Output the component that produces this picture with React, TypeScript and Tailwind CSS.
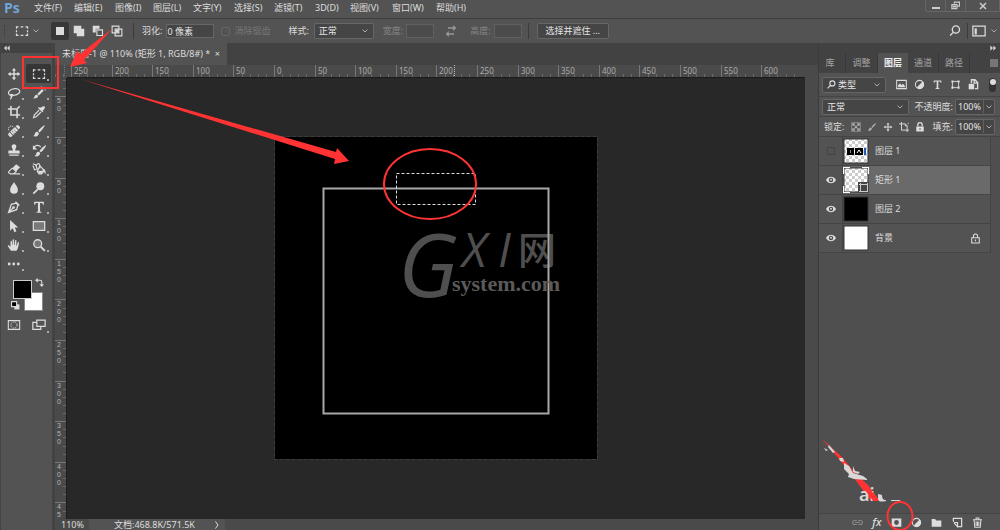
import { ReactNode } from "react";

const menus = [
  { label: "文件(F)", width: "w-10" },
  { label: "编辑(E)", width: "w-[41px]" },
  { label: "图像(I)", width: "w-[38px]" },
  { label: "图层(L)", width: "w-10" },
  { label: "文字(Y)", width: "w-[41px]" },
  { label: "选择(S)", width: "w-10" },
  { label: "滤镜(T)", width: "w-[41px]" },
  { label: "3D(D)", width: "w-[35px]" },
  { label: "视图(V)", width: "w-[42px]" },
  { label: "窗口(W)", width: "w-11" },
  { label: "帮助(H)", width: "w-10" },
];

const line = "fill-none stroke-current";

function Icon({ children, className = "size-4" }: { children: ReactNode; className?: string }) {
  return (
    <svg aria-hidden="true" viewBox="0 0 16 16" className={`shrink-0 ${className}`} fill="currentColor">
      {children}
    </svg>
  );
}

const marqueePath = (
  <path
    className={line}
    strokeWidth="1.4"
    d="M1.7 5.5V3.2H4M6.5 3.2h3M12 3.2h2.3v2.3M14.3 7v2.5M14.3 10.8V13H12M9.5 13h-3M4 13H1.7v-2.2M1.7 9.5V7"
  />
);
const movePath = (
  <path d="M8 1l2.5 3H8.8v3.200H12V5.500L15 8l-3 2.500V8.800H8.800V12h1.700L8 15l-2.500-3h1.700V8.800H4v1.700L1 8l3-2.500v1.700h3.200V4H5.500z" />
);
const brushPath = (
  <path d="M14.800 1.200c-2.500 1-6 4.300-7.800 6.800l1.700 1.600c2.400-2.100 5.400-5.800 6.100-8.400zM6.200 8.900C4.300 8.700 3.400 10 3.200 11.500c-.2 1.400-.9 2-2 2.300 2.200 1.200 6.400.7 6.700-3.300z" />
);
const textPath = <path d="M2.500 2h11v3.500h-1c-.2-1.500-.8-2-2.200-2H9.200v9c0 .7.400.9 1.600 1v1H5.200v-1c1.200-.1 1.600-.3 1.600-1v-9H5.700c-1.400 0-2 .5-2.200 2h-1z" />;
const halfPath = (
  <>
    <circle cx="8" cy="8" r="6" className={line} strokeWidth="1.5" />
    <path d="M12.500 3.500A6 6 0 1 1 4 12.500z" />
  </>
);
const framePath = (
  <>
    <path className={line} strokeWidth="1.3" d="M4 3.500h8M4 12.500h8M3.500 4v8M12.500 4v8" />
    <path d="M2 2h3v3H2zM11 2h3v3h-3zM2 11h3v3H2zM11 11h3v3h-3z" />
  </>
);

const tools: { name: string; art: ReactNode }[] = [
  { name: "移动", art: movePath },
  { name: "矩形选框", art: marqueePath },
  {
    name: "套索",
    art: <path className={line} strokeWidth="1.4" d="M5.500 10.800C1.500 11 .8 7.500 3 5.300 5.800 2.500 12.500 2 14.200 4.800c1.500 2.900-2.500 5.700-7 5.900M5.500 9.500c-2 0-2.300 2 0 2.100 2-.1 1.500-2 0-2.100zM4.300 11.500c1.200 1 .8 2.500-.8 3.500" />,
  },
  {
    name: "快速选择",
    art: (
      <>
        <path d="M11.500 3.500l1.800 1.800-5.500 5.500L6 9zM5.300 9.700l1.800 1.800c-.8 2.300-3 3-5.800 2.800 1.500-.8 1.500-3.700 4-4.600z" />
        <path className={line} strokeDasharray="1.5 1.5" strokeWidth="1.2" d="M10 1.500c3-1 5.500 1 5 5" />
      </>
    ),
  },
  { name: "裁剪", art: <path className={line} strokeWidth="1.8" d="M4.500 1v10.500H15M1 4.500h10.500V15M12 4l2.500-2.500" /> },
  {
    name: "吸管",
    art: (
      <>
        <path d="M10.800 2.700c1.300-1.500 2.700-1.700 3.500-.9s.6 2.200-.9 3.500l-1.200 1.100.8.800-1.200 1.200-5-5L8 2.200l.8.800z" />
        <path className={line} strokeWidth="1.4" d="M8.200 5.800l-5.500 5.500-.9 3 3-.9L10.300 8" />
      </>
    ),
  },
  {
    name: "污点修复画笔",
    art: (
      <>
        <path d="M9.800 2.500l2-1.500c1.500.2 3 1.700 3.200 3.200l-1.800 2zM9 3.300l3.700 3.700-5.500 5.500-3.700-3.700zM2.800 9.500l3.700 3.700-1.700 1.600c-1.700.2-3.700-1.800-3.500-3.500z" />
        <path className={line} strokeDasharray="1.5 1" d="M7 3C4 .8.200 4 2.300 8" />
        <path fill="#535353" d="M8 6.500h1v1H8zM9.700 8h1v1h-1zM6 8.300h1v1H6zM7.700 10h1v1h-1z" />
      </>
    ),
  },
  { name: "画笔", art: brushPath },
  {
    name: "仿制图章",
    art: <path d="M8 1.500c2 0 3.200 1.600 2.500 3.300L9.500 7v1.500h4c.7 0 1 .4 1 1V12h-13V9.500c0-.6.300-1 1-1h4V7l-1-2.200C4.800 3.100 6 1.500 8 1.500zM2.500 13h11v1.500h-11z" />,
  },
  {
    name: "历史记录画笔",
    art: (
      <>
        <g transform="translate(1.5 1)">{brushPath}</g>
        <path className={line} strokeWidth="1.5" d="M2 5.500c2-3.500 5.500-3.500 8-1" />
        <path d="M1 2.500v5h5z" />
      </>
    ),
  },
  {
    name: "橡皮擦",
    art: (
      <>
        <path d="M10.500 2.500L15 6l-4.500 4.700L6 7z" />
        <path className={line} strokeWidth="1.3" d="M6 7l-4 4c-.4.500-.3 1 0 1.300L4 13.500h3.500l3-2.800L6 7M8 13.500h7" />
      </>
    ),
  },
  {
    name: "油漆桶",
    art: (
      <>
        <path className={line} strokeWidth="1.3" d="M1 2l3 1 2 5-3 1-2-5M5 5c0-4 4-4 4-.5v3" />
        <path className={line} strokeWidth="1.4" d="M9 4.500l5 5-3 4H8L6 10.500z" />
        <path d="M12 8c3 0 4 2 3.500 6-1.500-1-1-3-3-3.500zM7 10h6l-2 3H8z" />
      </>
    ),
  },
  { name: "模糊", art: <path d="M8 1c1.500 3.300 4.500 5.500 4.500 9a4.500 4.500 0 0 1-9 0C3.500 6.500 6.500 4.300 8 1z" /> },
  {
    name: "减淡",
    art: (
      <>
        <circle cx="9.500" cy="6" r="4.500" />
        <path className={line} strokeWidth="2" d="M6.500 9.500L1.500 14.500" />
      </>
    ),
  },
  {
    name: "钢笔",
    art: (
      <>
        <path className={line} strokeWidth="1.5" d="M10.500 3.500L5 5 1.800 14.200 11 11l1.500-5.500zM2 14l5-5" />
        <circle cx="7.500" cy="8.500" r="1.500" />
        <path d="M10.200 1.300l4.500 4.500-1.500 1-4-4z" />
      </>
    ),
  },
  { name: "横排文字", art: textPath },
  { name: "路径选择", art: <path d="M3.500 1v12.500l3-2.800L8.500 15l2.300-1-1.900-4.200 3.900-.1z" /> },
  { name: "矩形", art: <path className="stroke-current" fill="#7a7a7a" strokeWidth="1.4" d="M1.500 3h13v10h-13z" /> },
  {
    name: "抓手",
    art: <path d="M4.500 14.500L1 9.500c-.5-1 .6-1.600 1.400-1L4 10V4c0-1.200 1.500-1.200 1.600 0l.4 4h.4V2.200c0-1.200 1.600-1.200 1.700 0V8h.5l.6-5c.1-1.200 1.700-1 1.600.2L10.600 8.500h.5l1.100-3.400c.4-1 1.700-.7 1.500.4-.7 4-1 6.500-2.700 9z" />,
  },
  {
    name: "缩放",
    art: (
      <>
        <circle cx="6.500" cy="6.500" r="4.500" fill="#777" className="stroke-current" strokeWidth="1.5" />
        <path className={line} strokeWidth="2.2" d="M10 10l4.700 4.700" />
      </>
    ),
  },
  {
    name: "编辑工具栏",
    art: (
      <>
        <circle cx="2.500" cy="8" r="1.600" />
        <circle cx="7.700" cy="8" r="1.600" />
        <circle cx="12.900" cy="8" r="1.600" />
      </>
    ),
  },
];

const layers = [
  { name: "图层 1", thumb: "pics", visible: false },
  { name: "矩形 1", thumb: "shape", visible: true, active: true },
  { name: "图层 2", thumb: "black", visible: true },
  { name: "背景", thumb: "white", visible: true, locked: true },
];

function Chevron({ className = "size-2" }: { className?: string }) {
  return (
    <svg aria-hidden="true" viewBox="0 0 8 8" className={`shrink-0 fill-none stroke-[#aaa] ${className}`}>
      <path d="M1.500 2.500L4 5l2.500-2.500" />
    </svg>
  );
}

function Dropdown({ label, value, className, icon }: { label: string; value: string; className: string; icon?: ReactNode }) {
  return (
    <div className={`relative flex h-4 items-center rounded-xs border border-[#666] bg-[#454545] px-1 ${className}`}>
      {icon}
      <select aria-label={label} className="min-w-0 flex-1 appearance-none bg-transparent text-[#e5e5e5] outline-none">
        <option>{value}</option>
      </select>
      <Chevron />
    </div>
  );
}

function PercentField({ label }: { label: string }) {
  return (
    <div className="mr-[5px] flex h-4 w-10 items-center rounded-xs border border-[#666] bg-[#454545]">
      <input
        aria-label={label}
        defaultValue="100%"
        className="min-w-0 flex-1 border-r border-[#606060] bg-transparent pl-[2px] text-[#e5e5e5] outline-none"
      />
      <button aria-label={`${label}滑块`} className="flex w-[10px] justify-center">
        <Chevron />
      </button>
    </div>
  );
}

function Divider() {
  return <span className="h-4 w-px shrink-0 bg-[#3c3c3c]" />;
}

function MenuBar() {
  return (
    <header className="flex h-[19px] shrink-0 border-b border-[#3d3d3d]">
      <span className="w-[34px] pl-1 font-['Open_Sans',sans-serif] text-[14px] leading-4 font-bold text-[#6fa5d8]">Ps</span>
      <nav className="flex">
        {menus.map((menu) => (
          <button key={menu.label} className={`h-4 text-left whitespace-nowrap ${menu.width}`}>
            {menu.label}
          </button>
        ))}
      </nav>
      <div className="ml-auto flex h-3 w-[75px] rounded-b-xs border border-t-0 border-[#666]">
        <button aria-label="最小化" className="flex w-5 items-center justify-center border-r border-[#666]">
          <span className="mt-1 h-[2px] w-2 bg-[#ccc]" />
        </button>
        <button aria-label="还原" className="flex w-5 items-center justify-center border-r border-[#666]">
          <Icon className="size-[9px] text-[#ccc]">
            <path className={line} strokeWidth="2" d="M6 5V2h9v7h-4M1.500 6.500h9v7h-9zM4 9.500h4v1H4z" />
          </Icon>
        </button>
        <button aria-label="关闭" className="flex flex-1 items-center justify-center">
          <Icon className="size-[8px] text-[#ccc]">
            <path className={line} strokeWidth="3" d="M2 2l12 12M14 2L2 14" />
          </Icon>
        </button>
      </div>
    </header>
  );
}

function OptionsBar() {
  return (
    <div className="flex h-6 shrink-0 items-center whitespace-nowrap">
      <span className="ml-1 h-3 w-px border-l border-dotted border-[#3a3a3a]" />
      <Icon className="ml-[10px] size-[14px]">{marqueePath}</Icon>
      <Chevron className="mr-[11px] ml-[3px] size-2" />
      <div className="flex h-[18px] gap-[1px]">
        <button aria-label="新选区" className="flex w-[18px] items-center justify-center rounded-xs bg-[#383838]">
          <span className="size-2 bg-[#ddd]" />
        </button>
        <button aria-label="添加到选区" className="flex w-[18px] items-center justify-center">
          <Icon className="size-[12px]">
            <path d="M1 1h10v4h4v10H5v-4H1z" />
          </Icon>
        </button>
        <button aria-label="从选区减去" className="flex w-[18px] items-center justify-center">
          <Icon className="size-[12px]">
            <path d="M1 1h9v4H5v5H1z" />
            <path className={line} strokeWidth="1.5" d="M6.500 6.500h7.500V14H6.500z" />
          </Icon>
        </button>
        <button aria-label="与选区交叉" className="flex w-[18px] items-center justify-center">
          <Icon className="size-[12px]">
            <path className={line} strokeWidth="1.5" d="M1.500 1.500h9v9h-9zM5.500 5.500h9v9h-9z" />
            <path d="M6 6h4v4H6z" />
          </Icon>
        </button>
      </div>
      <span className="ml-[7px] flex">
        <Divider />
      </span>
      <label className="ml-2 flex items-center gap-1">
        羽化:
        <input defaultValue="0 像素" className="h-[14px] w-12 border border-[#666] bg-[#454545] text-[#e5e5e5] outline-none" />
      </label>
      <label className="ml-[7px] flex items-center gap-1 text-[#777]">
        <input type="checkbox" disabled className="size-[9px] appearance-none rounded-xs border border-[#656565]" />
        消除锯齿
      </label>
      <span className="ml-[18px]">样式:</span>
      <Dropdown label="样式" value="正常" className="ml-[5px] w-[60px]" />
      <label className="ml-[9px] flex items-center gap-[3px] text-[#858585]">
        宽度:
        <input disabled className="h-[14px] w-7 border border-[#606060] bg-[#4c4c4c]" />
      </label>
      <button aria-label="互换宽高" className="ml-[11px] text-[#999]">
        <Icon className="size-3">
          <path d="M4 3h7V0l4 4-4 4V5H4zM12 11H5V8l-4 4 4 4v-3h7z" />
        </Icon>
      </button>
      <label className="ml-[13px] flex items-center gap-[3px] text-[#858585]">
        高度:
        <input disabled className="h-[14px] w-7 border border-[#606060] bg-[#4c4c4c]" />
      </label>
      <span className="ml-[6px] flex">
        <Divider />
      </span>
      <button className="ml-2 h-4 w-[72px] rounded-xs border border-[#666] bg-[#454545] text-[#e5e5e5]">选择并遮住 ...</button>
      <button aria-label="搜索" className="mr-[6px] ml-auto">
        <Icon className="size-[12px]">
          <path className={line} strokeWidth="1.8" d="M14 6a4.800 4.800 0 1 1-9.600 0A4.800 4.800 0 0 1 14 6zM6 9.500L1.500 14" />
        </Icon>
      </button>
      <Divider />
      <button aria-label="工作区" className="ml-1 flex items-center">
        <Icon className="size-[14px]">
          <path className={line} strokeWidth="1.4" d="M1 2.500h14v11H1z" />
          <path d="M3 5h2.500v7H3z" />
        </Icon>
        <Chevron className="mr-[2px] ml-1 size-2" />
      </button>
    </div>
  );
}

function ToolBox() {
  return (
    <aside className="flex w-[53px] shrink-0 flex-col border-r border-l border-[#444]">
      <div className="flex h-[10px] items-center bg-[#424242] pl-[3px]">
        <Icon className="size-[6px]">
          <path d="M7 1v14L0 8zM15 1v14L8 8z" />
        </Icon>
      </div>
      <div className="mt-[11px] grid grid-cols-2 pr-px">
        {tools.map((tool) => (
          <button
            key={tool.name}
            aria-label={tool.name}
            className={`relative flex h-[19px] items-center justify-center rounded-xs ${tool.name === "矩形选框" ? "bg-[#363636]" : ""}`}
          >
            <Icon className="size-[14px]">{tool.art}</Icon>
            <span className="absolute right-[2px] bottom-[2px] size-[2px] bg-[#aaa]" />
          </button>
        ))}
      </div>
      <div className="relative mt-[5px] ml-2 h-9 w-9">
        <button aria-label="背景色" className="absolute top-[14px] left-[15px] size-[19px] border border-[#888] bg-white" />
        <button aria-label="前景色" className="absolute top-[2px] left-1 size-[19px] border border-[#ccc] bg-black" />
        <Icon className="absolute top-0 right-[1px] size-[9px]">
          <path className={line} strokeWidth="2" d="M3 4h6c2 0 3 1 3 3v5" />
          <path d="M5 0v8L0 4zM8 11h8l-4 5z" />
        </Icon>
        <Icon className="absolute bottom-1 left-[2px] size-[9px]">
          <path d="M6 6h9v9H6z" />
          <path fill="#000" stroke="#ddd" strokeWidth="2" d="M1 1h9v9H1z" />
        </Icon>
      </div>
      <div className="mt-[3px] grid grid-cols-2 pr-px">
        <button aria-label="快速蒙版" className="flex h-4 items-center justify-center">
          <Icon className="size-[14px]">
            <path className={line} strokeWidth="1.2" d="M1.500 3h13v10h-13z" />
            <circle cx="8" cy="8" r="3.500" className={line} strokeDasharray="1.5 1" />
          </Icon>
        </button>
        <button aria-label="屏幕模式" className="relative flex h-4 items-center justify-center">
          <Icon className="size-[14px]">
            <path className={line} strokeWidth="1.4" d="M5 5H1v8h9v-3M5.500 2.500H15v7H5.500z" />
          </Icon>
          <span className="absolute right-[2px] bottom-0 size-[2px] bg-[#aaa]" />
        </button>
      </div>
    </aside>
  );
}

// 50 document pixels cover 40.6 screen pixels at the current zoom
const STEP = 40.6;

function tickPositions(origin: number, end: number) {
  const ticks: { at: number; major: boolean; value: number }[] = [];
  for (let i = -35; i <= 80; i++) {
    const at = Math.round(origin + (i * STEP) / 5);
    if (at > 0 && at < end) ticks.push({ at, major: i % 5 === 0, value: Math.abs(i * 10) });
  }
  return ticks;
}

function HorizontalRuler() {
  return (
    <svg aria-hidden="true" className="block h-[13px] w-full bg-[#4a4a4a] text-[8px]">
      {tickPositions(222, 750).map((tick) => (
        <g key={tick.at}>
          <path stroke={tick.major ? "#777" : "#6a6a6a"} d={`M${tick.at - 3}.5 ${tick.major ? 0 : 9}V12`} />
          {tick.major && (
            <text x={tick.at} y="9" fill="#aaa">
              {tick.value}
            </text>
          )}
        </g>
      ))}
      <path stroke="#bbb" strokeDasharray="1 1" d="M399.500 0V12" />
      <path stroke="#777" strokeDasharray="1 1" d="M9.500 0V12" />
      <path stroke="#1c1c1c" d="M12 12.500H750" />
    </svg>
  );
}

function VerticalRuler() {
  return (
    <svg aria-hidden="true" className="h-full w-3 shrink-0 bg-[#4a4a4a] font-['Liberation_Sans',sans-serif] text-[7px]">
      {tickPositions(59, 441).map((tick) => (
        <g key={tick.at}>
          <path stroke={tick.major ? "#777" : "#6a6a6a"} d={`M${tick.major ? 0 : 8} ${tick.at}.5H12`} />
          {tick.major &&
            String(tick.value)
              .split("")
              .map((digit, i) => (
                <text key={i} x="2" y={tick.at + 7 + i * 8} fill="#b5b5b5">
                  {digit}
                </text>
              ))}
        </g>
      ))}
      <path stroke="#1c1c1c" d="M11.500 0V441" />
    </svg>
  );
}

function Artboard() {
  return (
    <svg
      role="img"
      aria-label="黑色画布"
      viewBox="275 137 322 322"
      className="absolute top-[59px] left-[208px] size-[322px] overflow-visible bg-black"
    >
      <rect x="274.500" y="136.500" width="323" height="323" fill="none" stroke="#3c3c3c" strokeDasharray="4 2" />
      <g fill="#4f4f4f" fontFamily="Open Sans, sans-serif" fontStyle="italic" fontWeight="500">
        <text x="398" y="297" fontSize="88">
          G
        </text>
        <text x="462" y="267" fontSize="47">
          X
        </text>
        <text x="498" y="267" fontSize="47">
          I
        </text>
      </g>
      <text x="518" y="264" fontSize="38" fontWeight="500" fill="#4f4f4f" fontFamily="Noto Sans CJK SC, sans-serif">
        网
      </text>
      <rect x="323.500" y="188.500" width="225" height="225" fill="none" stroke="#a8a8a8" strokeWidth="2" />
      <text x="452" y="291" fontSize="22" fontWeight="700" fill="#5a5a5a" fontFamily="Liberation Serif, serif">
        system.com
      </text>
      <rect x="396.500" y="173.500" width="79" height="31" fill="none" stroke="#ddd" strokeDasharray="3 2" />
      <ellipse cx="430" cy="184" rx="46" ry="35" fill="none" stroke="#f33" strokeWidth="2" />
    </svg>
  );
}

function Workspace() {
  return (
    <main className="flex min-w-0 flex-1 flex-col bg-[#424242] pl-[2px]">
      <div className="flex h-[22px] shrink-0">
        <div className="flex w-[172px] items-center justify-between bg-[#535353] pr-[7px] pl-[7px] whitespace-nowrap">
          <span>未标题-1 @ 110% (矩形 1, RGB/8#) *</span>
          <button aria-label="关闭文档">×</button>
        </div>
      </div>
      <div className="flex min-h-0 flex-1">
        <div className="flex min-w-0 flex-1 flex-col">
          <HorizontalRuler />
          <div className="flex min-h-0 flex-1">
            <VerticalRuler />
            <div className="relative flex-1 overflow-hidden bg-[#282828]">
              <Artboard />
            </div>
          </div>
        </div>
        <div className="w-[13px] shrink-0 bg-[#4a4a4a]" />
      </div>
      <footer className="flex h-[11px] shrink-0 bg-[#4a4a4a] leading-[11px] text-[#ddd]">
        <span className="w-[34px] pl-[6px]">110%</span>
        <div className="flex w-[136px] items-center justify-between bg-[#535353] pr-1 pl-[25px]">
          <span>文档:468.8K/571.5K</span>
          <Icon className="size-[8px]">
            <path className={line} strokeWidth="2" d="M5 1l5 7-5 7" />
          </Icon>
        </div>
      </footer>
    </main>
  );
}

function Thumbnail({ kind }: { kind: string }) {
  const checker = kind === "pics" || kind === "shape";
  return (
    <svg aria-hidden="true" viewBox="0 0 26 26" className="size-[26px] shrink-0 overflow-hidden">
      <defs>
        <pattern id="checker" width="6" height="6" patternUnits="userSpaceOnUse">
          <path fill="#fff" d="M0 0h6v6H0z" />
          <path fill="#ccc" d="M0 0h3v3H0zM3 3h3v3H3z" />
        </pattern>
      </defs>
      <rect x="1" y="1" width="24" height="24" stroke="#333" fill={checker ? "url(#checker)" : kind === "black" ? "#000" : "#fff"} />
      {kind === "pics" && (
        <>
          <path d="M4 10h7v7H4zM12 10h8v7h-8z" />
          <path stroke="#888" d="M7.500 12v3" />
          <path className="fill-none stroke-white" d="M14 15l2-3 2 3" />
          <path fill="#2458b8" d="M21 10h2v7h-2z" />
        </>
      )}
      {kind === "shape" && (
        <>
          <path className="fill-none stroke-white" strokeWidth="2" d="M0 7V0h7M19 0h7v7M26 19v7h-7M7 26H0v-7" />
          <path fill="#444" d="M15 15h11v11H15z" />
          <path className="fill-none stroke-[#ccc]" d="M17.500 16v9M24.500 16v9M16 17.500h9M16 24.500h9" />
        </>
      )}
    </svg>
  );
}

function LayersPanel() {
  return (
    <aside className="flex w-[182px] shrink-0 flex-col border-l border-[#3c3c3c] bg-[#4f4f4f]">
      <div className="flex h-[10px] shrink-0 items-center justify-end bg-[#424242] pr-1">
        <Icon className="size-[6px]">
          <path d="M1 1v14l7-7zM9 1v14l7-7z" />
        </Icon>
      </div>
      <div role="tablist" className="flex h-5 shrink-0 bg-[#424242] text-[#a5a5a5]">
        <button role="tab" className="w-[27px] border-r border-[#383838] pr-1">库</button>
        <button role="tab" className="w-8 border-r border-[#383838]">调整</button>
        <button role="tab" aria-selected="true" className="w-[30px] bg-[#535353] font-bold text-[#eee]">图层</button>
        <button role="tab" className="w-[31px] border-r border-[#383838]">通道</button>
        <button role="tab" className="w-[31px] border-r border-[#383838]">路径</button>
        <button aria-label="面板菜单" className="mr-[2px] ml-auto text-[#aaa]">
          <Icon className="size-[8px]">
            <path d="M0 1h16v2H0zM0 5h16v2H0zM0 9h16v2H0zM0 13h16v2H0z" />
          </Icon>
        </button>
      </div>
      <div className="flex h-6 shrink-0 items-center border-b border-[#444] bg-[#535353] pl-[3px]">
        <Dropdown
          label="筛选"
          value="类型"
          className="w-16 gap-[2px]"
          icon={
            <Icon className="size-[9px]">
              <path className={line} strokeWidth="2" d="M14 6a4.500 4.500 0 1 1-9 0 4.500 4.500 0 0 1 9 0zM6 9.500L1 15" />
            </Icon>
          }
        />
        <div className="ml-[10px] flex gap-[7px]">
          <Icon className="size-[11px]">
            <path className={line} strokeWidth="1.5" d="M1 2h14v12H1z" />
            <path d="M3 12V9l3-3 2 3 2-2 3 3v2z" />
          </Icon>
          <Icon className="size-[11px]">{halfPath}</Icon>
          <Icon className="size-[11px]">{textPath}</Icon>
          <Icon className="size-[11px]">{framePath}</Icon>
          <Icon className="size-[11px]">
            <path d="M1 7h8v8H1z" />
            <path className={line} strokeWidth="2" d="M5 6V1h5l4 4v9h-4M9 1v5h5" />
          </Icon>
        </div>
        <span className="mr-1 ml-auto flex h-[14px] w-[7px] justify-center rounded-full bg-[#333]">
          <span className="mt-[1px] size-[6px] rounded-full bg-[#ddd]" />
        </span>
      </div>
      <div className="flex h-5 shrink-0 items-center border-b border-[#444] bg-[#535353] pl-[3px]">
        <Dropdown label="混合模式" value="正常" className="w-[87px]" />
        <span className="mr-[2px] ml-auto whitespace-nowrap">不透明度:</span>
        <PercentField label="不透明度" />
      </div>
      <div className="flex h-5 shrink-0 items-center gap-[6px] border-b border-[#444] bg-[#535353] pl-[5px]">
        <span className="w-[21px] whitespace-nowrap">锁定:</span>
        <Icon className="size-[10px] text-[#aaa]">
          <path className={line} d="M1 1h14v14H1z" />
          <path d="M2 2h4v4H2zM10 2h4v4h-4zM6 6h4v4H6zM2 10h4v4H2zM10 10h4v4h-4z" />
        </Icon>
        <Icon className="size-[10px] text-[#aaa]">{brushPath}</Icon>
        <Icon className="size-[10px]">{movePath}</Icon>
        <Icon className="size-[10px]">
          <path className={line} strokeWidth="1.5" d="M4 0v13h12M0 3h10l3 3v10M10 3v3h3M14 3l2-2" />
        </Icon>
        <Icon className="size-[10px]">
          <path fillRule="evenodd" d="M2 7h12v8H2zM7.200 9.500v3h1.600v-3z" />
          <path className={line} strokeWidth="2" d="M4.500 7V4.500a3.500 3.500 0 0 1 7 0V7" />
        </Icon>
        <span className="-mr-1 ml-auto whitespace-nowrap">填充:</span>
        <PercentField label="填充" />
      </div>
      <ul className="mr-[9px] border-r border-[#444]">
        {layers.map((layer) => (
          <li
            key={layer.name}
            className={`flex h-[29px] items-center border-b border-[#444] ${layer.active ? "bg-[#6a6a6a]" : "bg-[#535353]"}`}
          >
            <button
              aria-label={`显示 ${layer.name}`}
              className="flex h-full w-6 shrink-0 items-center justify-center border-r border-[#444] bg-[#535353]"
            >
              {layer.visible ? (
                <Icon className="size-[10px]">
                  <path d="M0 8c4-7 12-7 16 0-4 7-12 7-16 0z" />
                  <circle cx="8" cy="8" r="3.500" fill="#4a4a4a" />
                  <circle cx="8" cy="7.500" r="1.500" />
                </Icon>
              ) : (
                <span className="size-2 border border-[#444]" />
              )}
            </button>
            <span className="flex">
              <Thumbnail kind={layer.thumb} />
            </span>
            <span className="ml-[6px]">{layer.name}</span>
            {layer.locked && (
              <Icon className="mr-[9px] ml-auto size-[11px]">
                <path className={line} strokeWidth="1.5" d="M2.500 7h11v7.500h-11zM5 7V4.500a3 3 0 0 1 6 0V7M8 9.500v2.500" />
              </Icon>
            )}
          </li>
        ))}
      </ul>
      <div className="mt-auto flex h-[17px] shrink-0 items-center justify-between border-t border-[#444] bg-[#535353] pr-[17px] pl-[33px]">
        <button aria-label="链接图层" className="flex text-[#888]">
          <Icon className="size-[11px]">
            <path className={line} strokeWidth="1.6" d="M7 11H4a3 3 0 0 1 0-6h3M9 5h3a3 3 0 0 1 0 6H9M4.500 8h7" />
          </Icon>
        </button>
        <button aria-label="图层样式" className="text-[11px] leading-4 font-medium italic">
          fx
        </button>
        <button aria-label="添加蒙版" className="flex">
          <Icon className="size-[11px]">
            <path fillRule="evenodd" d="M1 2h14v12H1zM8 4.500a3.500 3.500 0 1 0 0 7 3.500 3.500 0 0 0 0-7z" />
          </Icon>
        </button>
        <button aria-label="调整图层" className="flex">
          <Icon className="size-[11px]">{halfPath}</Icon>
        </button>
        <button aria-label="新建组" className="flex">
          <Icon className="size-[11px]">
            <path d="M1 3h5l1.500 2H15v9H1z" />
          </Icon>
        </button>
        <button aria-label="新建图层" className="flex">
          <Icon className="size-[11px]">
            <path className={line} strokeWidth="1.8" d="M2 7V2h12v12H9M3 8h5v6L3 8.500" />
          </Icon>
        </button>
        <button aria-label="删除图层" className="flex">
          <Icon className="size-[11px]">
            <path className={line} strokeWidth="1.5" d="M1.500 4h13M6 3.500V1.500h4v2M3 4l1 11h8l1-11M6 6.500V13M8 6.500V13M10 6.500V13" />
          </Icon>
        </button>
      </div>
    </aside>
  );
}

// Red pointers drawn over the window
function Annotations() {
  return (
    <>
      <svg aria-hidden="true" className="pointer-events-none absolute top-0 left-0 h-44 w-[380px]" fill="#f33">
        <rect x="23" y="57" width="35" height="31" fill="none" stroke="#f33" strokeWidth="2" />
        <path d="M113 28L84 60l3 3-17 4 7-16 3 3z" />
        <path d="M80 79l256 73 1-4 12 13-15 3 1-5z" />
      </svg>
      <svg aria-hidden="true" viewBox="810 430 190 100" className="pointer-events-none absolute right-0 bottom-0 h-[100px] w-[190px]">
        <path fill="#f33" d="M822 439l20 18 14 17 12 11 11 15-8 1-14-19-18-23z" />
        <g fill="#d8d8d8">
          <path d="M829 445l6 7-2 1-5-6zM824 448l4 2-2 1zM839 458l4 0 1 4-4-1zM844 463l5 3 4 7 10 3 4 3v1l-13-1-6-2 1-3-5-5zM853 466l2 5 5 1-2 2-5-2z" />
          <path d="M878 494v5c0 3 4 3 8 2v-1c-3 0-4-2-4-5zM891 500h10l-2 1h-8z" />
        </g>
        <text x="859" y="501" fontSize="18" fontWeight="600" fill="#d8d8d8">
          ai
        </text>
        <path fill="#f33" d="M862 486l6 0 11 15h-6z" />
        <ellipse cx="900" cy="516" rx="12.500" ry="14" fill="none" stroke="#f33" strokeWidth="2" />
      </svg>
    </>
  );
}

export default function App() {
  return (
    <div className="relative flex h-screen flex-col overflow-hidden bg-[#535353] font-['Noto_Sans','Noto_Sans_CJK_SC',sans-serif] text-[9px] text-[#ddd]">
      <MenuBar />
      <OptionsBar />
      <div className="flex min-h-0 flex-1">
        <ToolBox />
        <Workspace />
        <LayersPanel />
      </div>
      <Annotations />
    </div>
  );
}
